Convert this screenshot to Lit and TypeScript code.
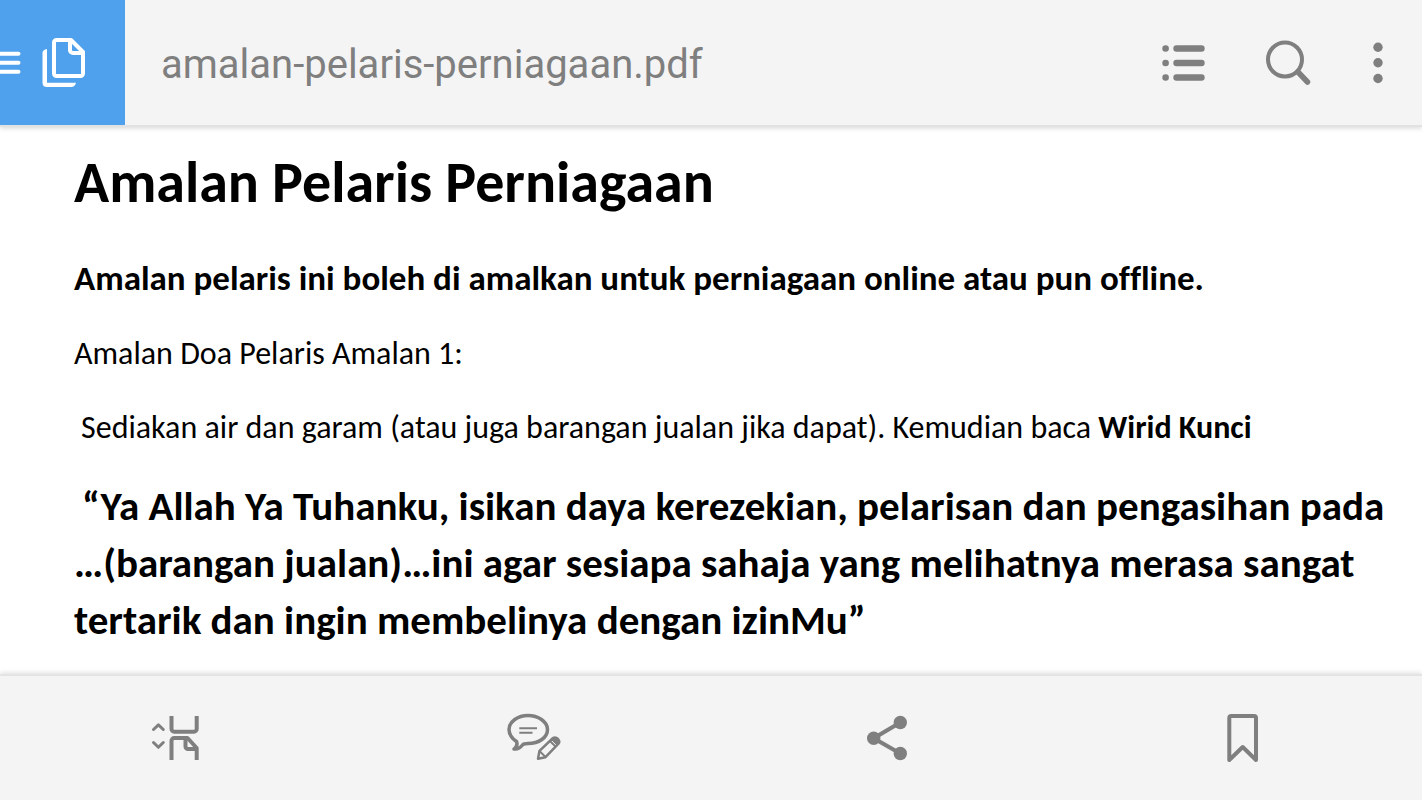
import { LitElement, html, css, svg } from "lit";
import { customElement } from "lit/decorators.js";

const pagesIcon = svg`
  <svg class="pages" viewBox="0 0 125 125" aria-hidden="true">
    <g fill="none" stroke="currentColor" stroke-width="4" stroke-linecap="round" stroke-linejoin="round">
      <path d="M-4 53.7H18.5M-4 62.7H18.5M-4 71.7H18.5"/>
      <path d="M56.5 40H71L83 52V73.500a2.500 2.500 0 0 1-2.500 2.500H56.500a2.500 2.500 0 0 1-2.500-2.500V42.500a2.500 2.500 0 0 1 2.500-2.500Z"/>
      <path d="M70 40.500V50a3 3 0 0 0 3 3H83" />
    </g>
    <path d="M42.500 52.500Q43 49.500 47 49V82.700H76Q75 86.500 72 87H47Q42.500 87 42.500 82.500Z" fill="currentColor"/>
  </svg>`;

const listIcon = svg`
  <svg class="icon" viewBox="0 0 64 64" aria-hidden="true">
    <g stroke="currentColor" stroke-width="6.400" stroke-linecap="round">
      <path d="M24.500 17.500H49.500M24.500 32H49.500M24.500 46.500H49.500"/>
      <path d="M13.500 17.500h.2M13.500 32h.2M13.500 46.500h.2"/>
    </g>
  </svg>`;

const searchIcon = svg`
  <svg class="icon" viewBox="0 0 64 64" aria-hidden="true">
    <g fill="none" stroke="currentColor" stroke-linecap="round">
      <circle cx="29" cy="28.500" r="17" stroke-width="4"/>
      <path d="M42 41L51.500 51" stroke-width="5.500"/>
    </g>
  </svg>`;

const moreIcon = svg`
  <svg class="icon" viewBox="0 0 64 64" aria-hidden="true">
    <g fill="currentColor">
      <circle cx="32" cy="16.300" r="4.700"/><circle cx="32" cy="31.800" r="4.700"/><circle cx="32" cy="47.500" r="4.700"/>
    </g>
  </svg>`;

const viewIcon = svg`
  <svg class="icon" viewBox="0 0 64 64" aria-hidden="true">
    <g fill="none" stroke="currentColor" stroke-width="4" stroke-linejoin="round">
      <path d="M25.500 10V23a2.700 2.700 0 0 0 2.700 2.700H48a2.700 2.700 0 0 0 2.700-2.700V10"/>
      <path d="M25.500 54V34.700a2.700 2.700 0 0 1 2.700-2.700H41.500L50.700 42V54"/>
      <path d="M39.500 32V40.500a2.500 2.500 0 0 0 2.500 2.500H50.700"/>
      <path d="M7.500 23.500L12.400 18.800L17.300 23.500M7.500 36.500L12.400 41.300L17.300 36.500" stroke-width="3" stroke-linecap="round"/>
    </g>
  </svg>`;

const commentIcon = svg`
  <svg class="icon" viewBox="0 0 64 64" aria-hidden="true">
    <g fill="none" stroke="currentColor" stroke-linejoin="round">
      <path d="M27 37.500C24.500 37.500 23 37.500 22 38.500C19.500 41.500 17 43.700 13 43C15.500 41 16.500 38 15.500 35.500C11 32.500 8 28.500 8 23.500C8 15.500 17 9.500 27 9.500S46.500 15.500 46.500 23.500S38 37.500 27 37.500Z" stroke-width="3.500"/>
      <path d="M18.300 22.300H36M18.300 26.700H31.500" stroke-width="2"/>
      <path d="M37 52.700L38.500 44.800L52 32Q54.500 30.500 57 33Q59.300 35.500 57.500 37.700L44.500 51.200Z" stroke-width="2.500"/>
      <path d="M38.500 45L44.500 51M49 35L54.500 40.500" stroke-width="2"/>
      <path d="M52 32Q54.500 30.500 57 33Q59.300 35.500 57.500 37.700L56 39L50.500 33.500Z" fill="currentColor"/>
    </g>
  </svg>`;

const shareIcon = svg`
  <svg class="icon" viewBox="0 0 64 64" aria-hidden="true">
    <path d="M43.300 16.500L16.700 32.300L43.300 47.500" fill="none" stroke="currentColor" stroke-width="4.200"/>
    <g fill="currentColor">
      <circle cx="43.300" cy="16.500" r="6.700"/><circle cx="16.700" cy="32.300" r="6.700"/><circle cx="43.300" cy="47.500" r="6.700"/>
    </g>
  </svg>`;

const bookmarkIcon = svg`
  <svg class="icon" viewBox="0 0 64 64" aria-hidden="true">
    <path d="M17.300 54V12a2 2 0 0 1 2-2H42a2 2 0 0 1 2 2V54L30.700 41Z" fill="none" stroke="currentColor" stroke-width="4" stroke-linejoin="round"/>
  </svg>`;

@customElement("app-root")
export class AppRoot extends LitElement {
  static styles = css`
    :host {
      display: flex;
      flex-direction: column;
      min-height: 100vh;
      background: #fff;
      color: #000;
      font-family: Carlito, Lato, sans-serif;
    }
    button {
      border: 0;
      padding: 0;
      background: none;
      color: #7f7f7f;
      display: flex;
      align-items: center;
      justify-content: center;
      cursor: pointer;
    }
    .bar {
      display: flex;
      background: #f4f4f4;
      flex: none;
    }
    .top {
      height: 125px;
      padding-right: 6px;
      box-shadow: 0 2px 0 #e2e2e2, 0 3px 5px #d4d4d4;
    }
    .bottom {
      height: 124px;
      box-shadow: 0 -2px 0 #e4e4e4, 0 -3px 5px #dcdcdc;
    }
    .bottom button {
      flex: 1;
    }
    .tab {
      width: 125px;
      background: #4fa1ee;
      color: #fff;
    }
    .pages {
      width: 125px;
      height: 125px;
    }
    .icon {
      width: 64px;
      height: 64px;
      display: block;
    }
    .name {
      flex: 1;
      min-width: 0;
      margin: 0;
      padding: 4px 36px 0;
      align-self: center;
      font: 400 40px/56px Roboto, sans-serif;
      color: #7f7f7f;
      white-space: nowrap;
    }
    .action {
      width: 104px;
    }
    .more {
      width: 76px;
    }
    .page {
      flex: 1;
      padding: 22px 0 16px 74px;
      white-space: nowrap;
      overflow: hidden;
      font-variant-ligatures: none;
    }
    h1,
    h2,
    p {
      margin: 0;
    }
    h1 {
      font-size: 58px;
      line-height: 72px;
    }
    h2 {
      font-size: 35px;
      line-height: 44px;
      margin-top: 37px;
    }
    .text {
      font-size: 32px;
      line-height: 40px;
      margin-top: 34px;
    }
    .indent {
      padding-left: 7px;
    }
    .quote {
      font-size: 41px;
      font-weight: 700;
      line-height: 57px;
      margin-top: 30px;
    }
    .lead {
      padding-left: 8px;
    }
  `;

  render() {
    return html`
      <header class="bar top">
        <button class="tab" aria-label="Documents">${pagesIcon}</button>
        <p class="name">amalan-pelaris-perniagaan.pdf</p>
        <button class="action" aria-label="Contents">${listIcon}</button>
        <button class="action" aria-label="Search">${searchIcon}</button>
        <button class="more" aria-label="More options">${moreIcon}</button>
      </header>
      <main class="page">
        <h1>Amalan Pelaris Perniagaan</h1>
        <h2>Amalan pelaris ini boleh di amalkan untuk perniagaan online atau pun offline.</h2>
        <p class="text">Amalan Doa Pelaris Amalan 1:</p>
        <p class="text indent">Sediakan air dan garam (atau juga barangan jualan jika dapat). Kemudian baca <b>Wirid Kunci</b></p>
        <p class="quote"><span class="lead">“Ya Allah Ya Tuhanku, isikan daya kerezekian, pelarisan dan pengasihan pada</span><br>…(barangan jualan)…ini agar sesiapa sahaja yang melihatnya merasa sangat<br>tertarik dan ingin membelinya dengan izinMu”</p>
      </main>
      <nav class="bar bottom" aria-label="Document tools">
        <button aria-label="View mode">${viewIcon}</button>
        <button aria-label="Comment">${commentIcon}</button>
        <button aria-label="Share">${shareIcon}</button>
        <button aria-label="Bookmark">${bookmarkIcon}</button>
      </nav>
    `;
  }
}
